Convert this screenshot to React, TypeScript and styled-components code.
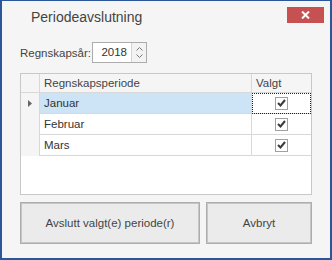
import { Fragment } from "react";
import styled, { createGlobalStyle } from "styled-components";

const GlobalStyle = createGlobalStyle`
  body {
    margin: 0;
    background: #f5f5f5;
    font-family: "Liberation Sans", Arial, sans-serif;
  }
`;

const Window = styled.div`
  width: 332px;
  height: 260px;
  box-sizing: border-box;
  border: 2px solid #2b579a;
  border-top-width: 1px;
  background: #f5f5f5;
  display: flex;
  flex-direction: column;
`;

const TitleBar = styled.div`
  height: 30px;
  display: flex;
  align-items: flex-start;
  justify-content: space-between;
  padding: 0 6px 0 29px;
`;

const Title = styled.div`
  font-size: 14px;
  color: #444;
  margin-top: 8px;
`;

const CloseButton = styled.div`
  margin-top: 6px;
  width: 37px;
  height: 16px;
  background: #c75050;
  display: flex;
  align-items: center;
  justify-content: center;
`;

const Body = styled.div`
  flex: 1;
  display: flex;
  flex-direction: column;
  padding: 11px 18px 14px 18px;
`;

const YearRow = styled.div`
  display: flex;
  align-items: center;
  height: 21px;
  font-size: 11.5px;
  color: #444;
`;

const Label = styled.span`
  flex-shrink: 0;
  width: 72px;
`;

const SpinBox = styled.div`
  display: flex;
  height: 21px;
  box-sizing: border-box;
  border: 1px solid #acacac;
  background: #fff;
`;

const SpinValue = styled.div`
  width: 38px;
  text-align: right;
  padding-right: 4px;
  box-sizing: border-box;
  line-height: 19px;
  color: #333;
`;

const SpinButtons = styled.div`
  width: 14px;
  border-left: 1px solid #d4d4d4;
  background: #f3f3f3;
  display: flex;
  flex-direction: column;
  align-items: center;
  justify-content: center;
  gap: 3px;
`;

const Grid = styled.div`
  margin-top: 10px;
  height: 122px;
  box-sizing: border-box;
  border: 1px solid #c8c8c8;
  background: #fff;
  display: grid;
  grid-template-columns: 19px 1fr 59px;
  grid-template-rows: 19px;
  grid-auto-rows: 21px;
  align-content: start;
  font-size: 11.5px;
  color: #333;
`;

const HeadCell = styled.div`
  background: #f5f5f5;
  border-right: 1px solid #d8d8d8;
  border-bottom: 1px solid #d8d8d8;
  padding-left: 4px;
  line-height: 18px;
  color: #444;
  &:nth-child(3) {
    border-right: none;
  }
`;

const RowHead = styled.div`
  background: #f5f5f5;
  border-right: 1px solid #d8d8d8;
  display: flex;
  align-items: center;
  justify-content: center;
`;

const Cell = styled.div<{ $selected?: boolean }>`
  background: ${(p) => (p.$selected ? "#cde4f7" : "#fff")};
  border-right: 1px solid #d8d8d8;
  border-bottom: 1px solid #d8d8d8;
  padding-left: 4px;
  line-height: 20px;
`;

const CheckCell = styled.div<{ $focus?: boolean }>`
  border-bottom: 1px solid #d8d8d8;
  display: flex;
  align-items: center;
  justify-content: center;
  outline: ${(p) => (p.$focus ? "1px dotted #222" : "none")};
  outline-offset: -1px;
`;

const CheckBox = styled.div`
  width: 11px;
  height: 11px;
  border: 1px solid #a0a0a0;
  background: #fff;
  display: flex;
  align-items: center;
  justify-content: center;
`;

const ButtonRow = styled.div`
  margin-top: 7px;
  display: flex;
  gap: 6px;
`;

const Button = styled.div<{ $width: number }>`
  width: ${(p) => p.$width}px;
  height: 42px;
  box-sizing: border-box;
  border: 1px solid #adadad;
  box-shadow: inset 0 0 0 1px #c6c6c6;
  background: #ebebeb;
  display: flex;
  align-items: center;
  justify-content: center;
  font-size: 11.5px;
  color: #444;
`;

const rows = ["Januar", "Februar", "Mars"];

function Check() {
  return (
    <CheckBox>
      <svg width="9" height="8" viewBox="0 0 9 8">
        <path d="M1 4 L3.5 6.5 L8 1" stroke="#3a3a3a" strokeWidth="2" fill="none" />
      </svg>
    </CheckBox>
  );
}

export default function App() {
  return (
    <>
      <GlobalStyle />
      <Window>
        <TitleBar>
          <Title>Periodeavslutning</Title>
          <CloseButton>
            <svg width="9" height="8" viewBox="0 0 9 8">
              <path d="M1 0.5 L8 7.5 M8 0.5 L1 7.5" stroke="#fff" strokeWidth="2" />
            </svg>
          </CloseButton>
        </TitleBar>
        <Body>
          <YearRow>
            <Label>Regnskapsår:</Label>
            <SpinBox>
              <SpinValue>2018</SpinValue>
              <SpinButtons>
                <svg width="7" height="4" viewBox="0 0 7 4">
                  <path d="M0.5 3.5 L3.5 0.5 L6.5 3.5" stroke="#777" fill="none" />
                </svg>
                <svg width="7" height="4" viewBox="0 0 7 4">
                  <path d="M0.5 0.5 L3.5 3.5 L6.5 0.5" stroke="#777" fill="none" />
                </svg>
              </SpinButtons>
            </SpinBox>
          </YearRow>
          <Grid>
            <HeadCell />
            <HeadCell>Regnskapsperiode</HeadCell>
            <HeadCell>Valgt</HeadCell>
            {rows.map((r, i) => (
              <Fragment key={r}>
                <RowHead>
                  {i === 0 && (
                    <svg width="4" height="7" viewBox="0 0 4 7">
                      <path d="M0 0 L4 3.5 L0 7 Z" fill="#666" />
                    </svg>
                  )}
                </RowHead>
                <Cell $selected={i === 0}>{r}</Cell>
                <CheckCell $focus={i === 0}>
                  <Check />
                </CheckCell>
              </Fragment>
            ))}
          </Grid>
          <ButtonRow>
            <Button $width={180}>Avslutt valgt(e) periode(r)</Button>
            <Button $width={106}>Avbryt</Button>
          </ButtonRow>
        </Body>
      </Window>
    </>
  );
}
